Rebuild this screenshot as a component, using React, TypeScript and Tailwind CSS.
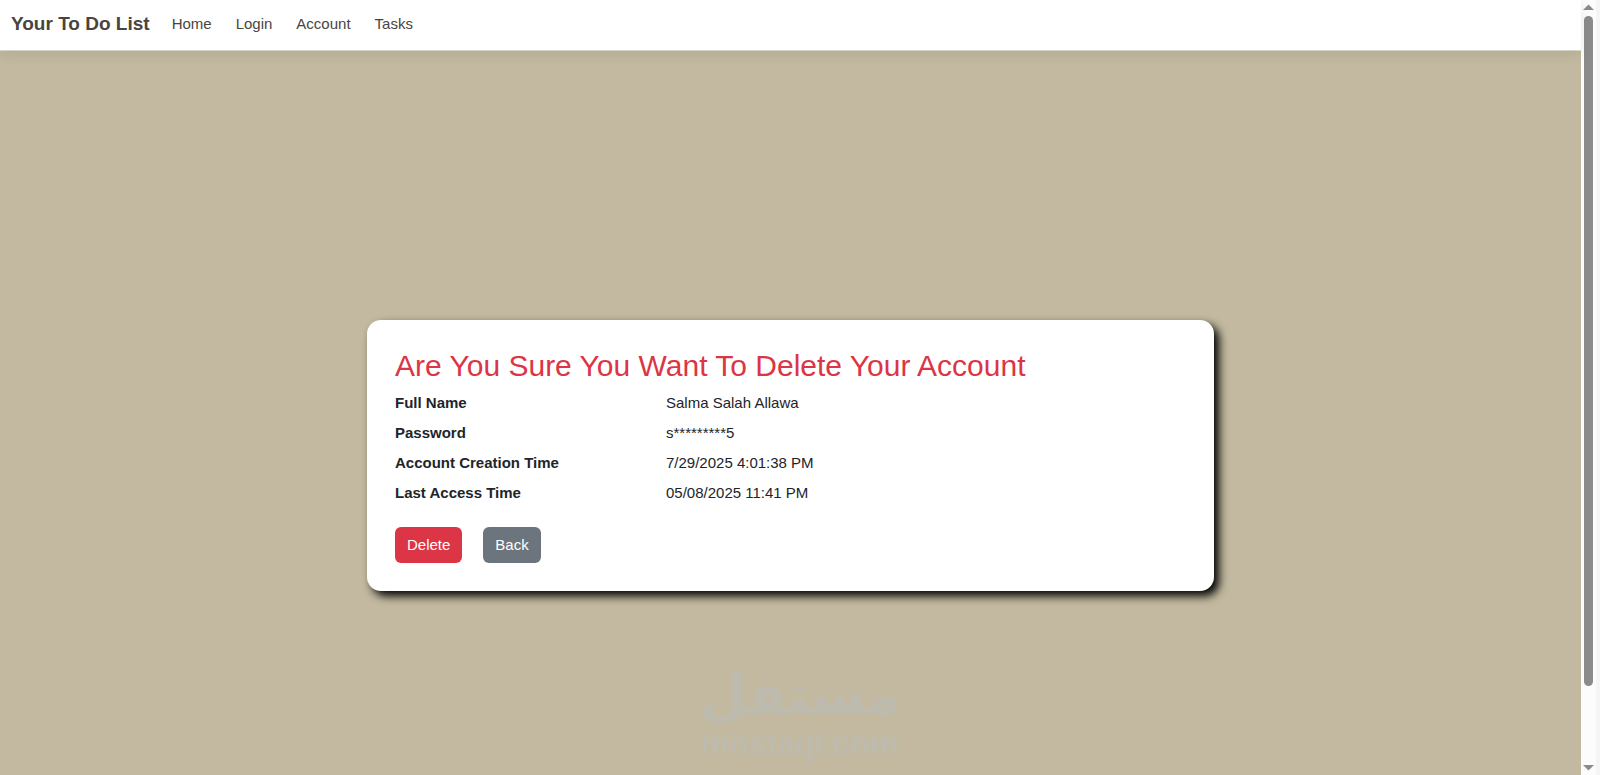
import { FormEvent } from 'react';

interface NavLink {
  label: string;
  href: string;
}

interface AccountDetail {
  label: string;
  value: string;
}

const NAV_LINKS: NavLink[] = [
  { label: 'Home', href: '#home' },
  { label: 'Login', href: '#login' },
  { label: 'Account', href: '#account' },
  { label: 'Tasks', href: '#tasks' },
];

const ACCOUNT_DETAILS: AccountDetail[] = [
  { label: 'Full Name', value: 'Salma Salah Allawa' },
  { label: 'Password', value: 's*********5' },
  { label: 'Account Creation Time', value: '7/29/2025 4:01:38 PM' },
  { label: 'Last Access Time', value: '05/08/2025 11:41 PM' },
];

function Navbar() {
  return (
    <header className="relative flex h-[51px] shrink-0 items-start border-b border-[#d5d3ca] bg-white px-[11px] pt-1 leading-10 text-[#4a443f] shadow-[0_4px_12px_rgba(0,0,0,0.08)]">
      <a href="#home" className="text-[19px] leading-10 font-bold">
        Your To Do List
      </a>
      <nav className="ml-[22px] flex gap-6">
        {NAV_LINKS.map((link) => (
          <a key={link.href} href={link.href} className="text-[15px] leading-10">
            {link.label}
          </a>
        ))}
      </nav>
    </header>
  );
}

function DeleteAccountCard() {
  const handleSubmit = (e: FormEvent) => {
    e.preventDefault();
  };

  return (
    <form
      onSubmit={handleSubmit}
      className="w-full max-w-[847px] rounded-[14px] bg-white p-7 shadow-[5px_5px_10px_#000]"
    >
      <h1 className="mb-2 text-[30px] leading-9 text-[#dc3545]">
        Are You Sure You Want To Delete Your Account
      </h1>
      <dl className="grid grid-cols-3 gap-x-[22px] text-[15px] leading-[22px]">
        {ACCOUNT_DETAILS.map((detail) => (
          <div key={detail.label} className="contents">
            <dt className="mb-2 font-bold">{detail.label}</dt>
            <dd className="col-span-2 mb-2">{detail.value}</dd>
          </div>
        ))}
      </dl>
      <div className="mt-[15px] flex gap-[21px] text-[15px] leading-[22px] text-white">
        <button type="submit" className="rounded-md bg-[#dc3545] px-3 py-[7px]">
          Delete
        </button>
        <button type="button" className="rounded-md bg-[#6c757d] px-3 py-[7px]">
          Back
        </button>
      </div>
    </form>
  );
}

function ScrollTrack() {
  return (
    <div className="flex w-[19px] shrink-0 flex-col items-center justify-between border-r-4 border-[#f5f5f5] bg-[#fcfcfc] py-1">
      <svg width="11" height="7" viewBox="0 0 11 7" className="shrink-0">
        <path d="M5.5 0.5 L11 6 H0 Z" fill="#8b8b8b" />
      </svg>
      <div className="mt-[5px] w-[9px] grow-[669] basis-0 rounded-full bg-[#8b8b8b]" />
      <div className="grow-[78] basis-0" />
      <svg width="11" height="7" viewBox="0 0 11 7" className="shrink-0">
        <path d="M0 1 H11 L5.5 6.5 Z" fill="#8b8b8b" />
      </svg>
    </div>
  );
}

function Watermark() {
  return (
    <div className="pointer-events-none absolute inset-x-0 bottom-4 flex flex-col items-center font-bold text-[#bdbbae]">
      <span lang="ar" dir="rtl" className="font-['DejaVu_Sans',sans-serif] text-[55px] leading-[64px]">
        مستقل
      </span>
      <span className="text-[32px] leading-8">mostaql.com</span>
    </div>
  );
}

export default function App() {
  return (
    <div className="relative flex h-screen overflow-hidden bg-[#c2b9a0] font-['Liberation_Sans',Arial,sans-serif] text-[#212529]">
      <div className="flex min-w-0 flex-1 flex-col">
        <Navbar />
        <main className="flex min-h-[calc(100vh+34px)] shrink-0 items-center justify-center">
          <DeleteAccountCard />
        </main>
      </div>
      <ScrollTrack />
      <Watermark />
    </div>
  );
}
